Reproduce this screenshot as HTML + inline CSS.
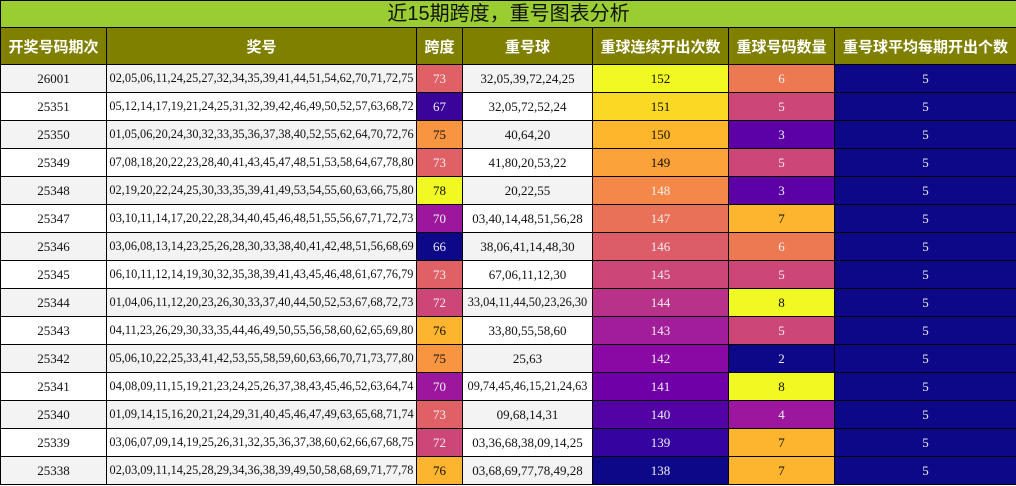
<!DOCTYPE html>
<html><head><meta charset="utf-8"><style>
body{margin:0;background:#fff;}
table{border-collapse:collapse;table-layout:fixed;width:1016px;}
td,th{border:1px solid #000;padding:0;text-align:center;overflow:hidden;white-space:nowrap;}
.t td{background:#9acd32;height:26px;font:20px/26px "Liberation Sans","Noto Sans CJK SC",sans-serif;color:#111;}
th{background:#808000;color:#fff;height:36px;font:bold 15px "Liberation Sans","Noto Sans CJK SC",sans-serif;}
td.d{height:27px;font:13px "Liberation Serif","Noto Serif CJK SC",serif;color:#111;}
td.n{font-size:12.3px;}
tr.g td.w{background:#f3f3f3;}
.l{color:#eee !important;}
</style></head><body>
<table>
<colgroup><col style="width:106px"><col style="width:310px"><col style="width:46px"><col style="width:130px"><col style="width:136px"><col style="width:106px"><col style="width:182px"></colgroup>
<tr class="t"><td colspan="7">近15期跨度，重号图表分析</td></tr>
<tr><th>开奖号码期次</th><th>奖号</th><th>跨度</th><th>重号球</th><th>重球连续开出次数</th><th>重球号码数量</th><th>重号球平均每期开出个数</th></tr>
<tr class="g"><td class="d w">26001</td><td class="d w n">02,05,06,11,24,25,27,32,34,35,39,41,44,51,54,62,70,71,72,75</td><td class="d l" style="background:#df6165">73</td><td class="d w">32,05,39,72,24,25</td><td class="d" style="background:#f0f921">152</td><td class="d l" style="background:#ed7953">6</td><td class="d l" style="background:#0d0887">5</td></tr>
<tr><td class="d w">25351</td><td class="d w n">05,12,14,17,19,21,24,25,31,32,39,42,46,49,50,52,57,63,68,72</td><td class="d l" style="background:#3a049a">67</td><td class="d w">32,05,72,52,24</td><td class="d" style="background:#f9d924">151</td><td class="d l" style="background:#cc4778">5</td><td class="d l" style="background:#0d0887">5</td></tr>
<tr class="g"><td class="d w">25350</td><td class="d w n">01,05,06,20,24,30,32,33,35,36,37,38,40,52,55,62,64,70,72,76</td><td class="d" style="background:#f89540">75</td><td class="d w">40,64,20</td><td class="d" style="background:#feb72d">150</td><td class="d l" style="background:#5c01a6">3</td><td class="d l" style="background:#0d0887">5</td></tr>
<tr><td class="d w">25349</td><td class="d w n">07,08,18,20,22,23,28,40,41,43,45,47,48,51,53,58,64,67,78,80</td><td class="d l" style="background:#df6165">73</td><td class="d w">41,80,20,53,22</td><td class="d" style="background:#fba238">149</td><td class="d l" style="background:#cc4778">5</td><td class="d l" style="background:#0d0887">5</td></tr>
<tr class="g"><td class="d w">25348</td><td class="d w n">02,19,20,22,24,25,30,33,35,39,41,49,53,54,55,60,63,66,75,80</td><td class="d" style="background:#f0f921">78</td><td class="d w">20,22,55</td><td class="d l" style="background:#f48849">148</td><td class="d l" style="background:#5c01a6">3</td><td class="d l" style="background:#0d0887">5</td></tr>
<tr><td class="d w">25347</td><td class="d w n">03,10,11,14,17,20,22,28,34,40,45,46,48,51,55,56,67,71,72,73</td><td class="d l" style="background:#9c179e">70</td><td class="d w">03,40,14,48,51,56,28</td><td class="d l" style="background:#e97158">147</td><td class="d" style="background:#fdb42f">7</td><td class="d l" style="background:#0d0887">5</td></tr>
<tr class="g"><td class="d w">25346</td><td class="d w n">03,06,08,13,14,23,25,26,28,30,33,38,40,41,42,48,51,56,68,69</td><td class="d l" style="background:#0d0887">66</td><td class="d w">38,06,41,14,48,30</td><td class="d l" style="background:#dc5c68">146</td><td class="d l" style="background:#ed7953">6</td><td class="d l" style="background:#0d0887">5</td></tr>
<tr><td class="d w">25345</td><td class="d w n">06,10,11,12,14,19,30,32,35,38,39,41,43,45,46,48,61,67,76,79</td><td class="d l" style="background:#df6165">73</td><td class="d w">67,06,11,12,30</td><td class="d l" style="background:#cc4778">145</td><td class="d l" style="background:#cc4778">5</td><td class="d l" style="background:#0d0887">5</td></tr>
<tr class="g"><td class="d w">25344</td><td class="d w n">01,04,06,11,12,20,23,26,30,33,37,40,44,50,52,53,67,68,72,73</td><td class="d l" style="background:#cc4778">72</td><td class="d w n">33,04,11,44,50,23,26,30</td><td class="d l" style="background:#b83289">144</td><td class="d" style="background:#f0f921">8</td><td class="d l" style="background:#0d0887">5</td></tr>
<tr><td class="d w">25343</td><td class="d w n">04,11,23,26,29,30,33,35,44,46,49,50,55,56,58,60,62,65,69,80</td><td class="d" style="background:#fdb42f">76</td><td class="d w">33,80,55,58,60</td><td class="d l" style="background:#a21d9a">143</td><td class="d l" style="background:#cc4778">5</td><td class="d l" style="background:#0d0887">5</td></tr>
<tr class="g"><td class="d w">25342</td><td class="d w n">05,06,10,22,25,33,41,42,53,55,58,59,60,63,66,70,71,73,77,80</td><td class="d" style="background:#f89540">75</td><td class="d w">25,63</td><td class="d l" style="background:#8a09a5">142</td><td class="d l" style="background:#0d0887">2</td><td class="d l" style="background:#0d0887">5</td></tr>
<tr><td class="d w">25341</td><td class="d w n">04,08,09,11,15,19,21,23,24,25,26,37,38,43,45,46,52,63,64,74</td><td class="d l" style="background:#9c179e">70</td><td class="d w n">09,74,45,46,15,21,24,63</td><td class="d l" style="background:#6f00a8">141</td><td class="d" style="background:#f0f921">8</td><td class="d l" style="background:#0d0887">5</td></tr>
<tr class="g"><td class="d w">25340</td><td class="d w n">01,09,14,15,16,20,21,24,29,31,40,45,46,47,49,63,65,68,71,74</td><td class="d l" style="background:#df6165">73</td><td class="d w">09,68,14,31</td><td class="d l" style="background:#5302a3">140</td><td class="d l" style="background:#9c179e">4</td><td class="d l" style="background:#0d0887">5</td></tr>
<tr><td class="d w">25339</td><td class="d w n">03,06,07,09,14,19,25,26,31,32,35,36,37,38,60,62,66,67,68,75</td><td class="d l" style="background:#cc4778">72</td><td class="d w">03,36,68,38,09,14,25</td><td class="d l" style="background:#3504a0">139</td><td class="d" style="background:#fdb42f">7</td><td class="d l" style="background:#0d0887">5</td></tr>
<tr class="g"><td class="d w">25338</td><td class="d w n">02,03,09,11,14,25,28,29,34,36,38,39,49,50,58,68,69,71,77,78</td><td class="d" style="background:#fdb42f">76</td><td class="d w">03,68,69,77,78,49,28</td><td class="d l" style="background:#0d0887">138</td><td class="d" style="background:#fdb42f">7</td><td class="d l" style="background:#0d0887">5</td></tr>
</table>
</body></html>
